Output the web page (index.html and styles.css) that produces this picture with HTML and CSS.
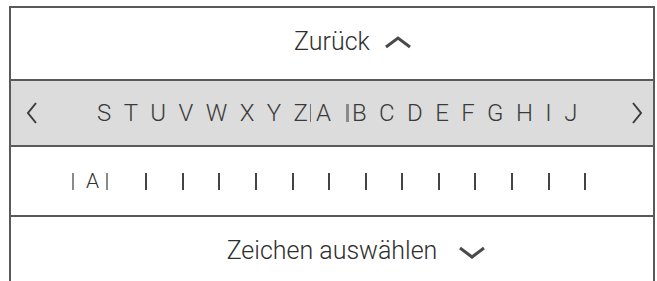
FILE: index.html
```html
<!DOCTYPE html>
<html lang="de">
<head>
<meta charset="utf-8">
<title>Zeichen auswählen</title>
<link rel="stylesheet" href="styles.css">
</head>
<body>
<div class="panel">
  <div class="row row-head">
    <span class="label">Zurück</span>
    <svg class="chev" width="28" height="13" viewBox="0 0 28 13"><polyline points="2,11 14,2 26,11" fill="none" stroke="#4a4a4a" stroke-width="3"/></svg>
  </div>
  <div class="row row-letters">
    <svg class="arrow" width="12" height="24" viewBox="0 0 12 24"><polyline points="10,2 2,12 10,22" fill="none" stroke="#3c3c3c" stroke-width="2"/></svg>
    <div class="letters"><span class="ltr">STUVWXY</span><span class="ltr-end">Z</span><span class="cur cur-thin"></span><span class="ltr-end">A</span><span class="cur cur-bold"></span><span class="ltr">BCDEFGHI</span><span class="ltr-end">J</span></div>
    <svg class="arrow" width="12" height="24" viewBox="0 0 12 24"><polyline points="2,2 10,12 2,22" fill="none" stroke="#3c3c3c" stroke-width="2"/></svg>
  </div>
  <div class="row row-input">
    <span class="bar bar-light"></span><span class="sel">A</span><span class="bar bar-light"></span>
    <div class="slots">
      <span class="bar"></span><span class="bar"></span><span class="bar"></span><span class="bar"></span><span class="bar"></span><span class="bar"></span><span class="bar"></span><span class="bar"></span><span class="bar"></span><span class="bar"></span><span class="bar"></span><span class="bar"></span><span class="bar"></span>
    </div>
  </div>
  <div class="row row-head">
    <span class="label">Zeichen auswählen</span>
    <svg class="chev chev-down" width="28" height="13" viewBox="0 0 28 13"><polyline points="2,2 14,11 26,2" fill="none" stroke="#4a4a4a" stroke-width="3"/></svg>
  </div>
</div>
</body>
</html>
```

FILE: styles.css
```css
html, body {
  margin: 0;
  padding: 0;
  background: #ffffff;
  overflow: hidden;
}
body {
  font-family: Roboto, "Open Sans", sans-serif;
  font-weight: 300;
  color: #333333;
}
.panel {
  margin: 6px 0 0 9px;
  width: 646px;
  border: 2px solid #5a5a5a;
  border-bottom: none;
  box-sizing: border-box;
}
.row + .row {
  border-top: 2px solid #5a5a5a;
}
.row-head {
  height: 71px;
  display: grid;
  grid-template-columns: 1fr auto 1fr;
  align-items: center;
}
.row-head .label {
  grid-column: 2;
  font-size: 25px;
  line-height: 1;
  margin-top: -4px;
  color: #2e2e2e;
}
.chev {
  grid-column: 3;
  justify-self: start;
  margin-left: 14px;
  margin-top: -2px;
}
.chev-down {
  margin-left: 21px;
  margin-top: 0;
}
.row-letters {
  height: 64px;
  background: #dcdcdc;
  display: flex;
  align-items: center;
  justify-content: space-between;
  padding: 0 10px 0 15px;
}
.letters {
  flex: 1;
  display: flex;
  align-items: center;
  padding-left: 59px;
  font-size: 24px;
  color: #3a3a3a;
}
.ltr {
  letter-spacing: 12.4px;
}
.ltr-end {
  letter-spacing: 0;
}
.cur {
  display: inline-block;
  width: 1px;
  height: 18px;
  background: #777;
  margin: 0 5px 0 2px;
}
.cur-bold {
  width: 3px;
  background: #8a8a8a;
  margin: 0 3px 0 15px;
}
.row-input {
  height: 68px;
  display: flex;
  align-items: center;
  padding-left: 61px;
}
.bar {
  display: inline-block;
  width: 2px;
  height: 17px;
  background: #444;
}
.bar-light {
  background: #8a8a8a;
}
.sel {
  font-size: 21px;
  line-height: 1;
  margin: 0 7px 0 12px;
  color: #333;
}
.slots {
  display: flex;
  gap: 34.6px;
  margin-left: 37px;
}
```
